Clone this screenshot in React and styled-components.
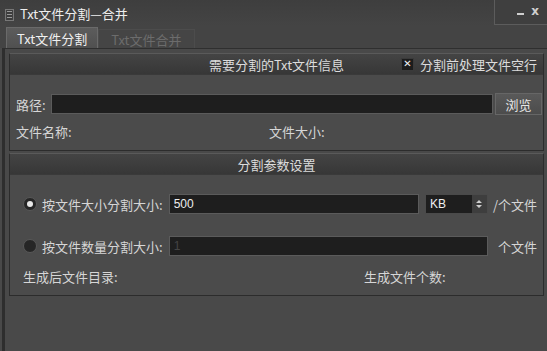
import React from "react"
import styled, { createGlobalStyle } from "styled-components"

const Global = createGlobalStyle`
  html, body { margin: 0; padding: 0; background: #4a4a4a; }
  body { font-family: "Noto Sans CJK SC", "Noto Sans", sans-serif; font-size: 13px; color: #d6d6d6; }
`

const Window = styled.div`
  width: 547px;
  height: 351px;
  background: #494949;
  display: flex;
  flex-direction: column;
  overflow: hidden;
`

const TitleBar = styled.div`
  height: 26px;
  display: flex;
  align-items: flex-start;
  background: linear-gradient(#3e3e3e, #444);
`

const TitleIcon = styled.span`
  width: 7px;
  height: 10px;
  margin: 9px 6px 0 5px;
  border: 1px solid #777;
  background: repeating-linear-gradient(#3c3c3c 0 2px, #999 2px 3px);
  background-size: 5px 3px;
  background-repeat: repeat-y;
  background-position: 1px 2px;
`

const Title = styled.div`
  margin-top: 6px;
  color: #eee;
  font-size: 13px;
  line-height: 16px;
`

const Controls = styled.div`
  margin-left: auto;
  width: 53px;
  height: 25px;
  border-left: 1px solid #5c5c5c;
  border-bottom: 1px solid #5c5c5c;
  background: #3f3f3f;
  display: flex;
  justify-content: flex-end;
  align-items: center;
  gap: 7px;
  padding: 0 8px 2px 0;
  box-sizing: border-box;
  color: #cfcfcf;
  font-family: "DejaVu Sans", sans-serif;
  font-weight: bold;
  font-size: 12px;
`

const MinLine = styled.span`
  width: 7px;
  height: 2px;
  margin-top: 5px;
  background: #cfcfcf;
`

const TabBar = styled.div`
  height: 22px;
  display: flex;
  align-items: flex-end;
  padding-left: 6px;
  background: #444;
`

const Tab = styled.div`
  height: ${p => (p.$active ? "21px" : "19px")};
  padding: 0 ${p => (p.$active ? "10px" : "12px")};
  display: flex;
  align-items: center;
  box-sizing: border-box;
  background: ${p => (p.$active ? "linear-gradient(#5c5c5c, #505050)" : "#454545")};
  border: 1px solid ${p => (p.$active ? "#6a6a6a" : "#4c4c4c")};
  border-bottom: none;
  color: ${p => (p.$active ? "#f0f0f0" : "#6c6c6c")};
  font-size: 13px;
`

const Panel = styled.div`
  flex: 1;
  margin-left: 2px;
  border-left: 3px solid #2e2e2e;
  border-top: 1px solid #2f2f2f;
  background: #494949;
  padding: 4px 3px 0 4px;
  display: flex;
  flex-direction: column;
  gap: 2px;
`

const Section = styled.div`
  border: 1px solid #2c2c2c;
  border-top-color: #5a5a5a;
  background: #4b4b4b;
  display: flex;
  flex-direction: column;
`

const SectionHead = styled.div`
  height: 20px;
  position: relative;
  display: flex;
  justify-content: center;
  align-items: center;
  background: linear-gradient(#444, #373737);
  border-bottom: 1px solid #3a3a3a;
  color: #dcdcdc;
`

const HeadCheck = styled.label`
  position: absolute;
  right: 6px;
  top: 0;
  height: 20px;
  display: flex;
  align-items: center;
  gap: 6px;
`

const CheckBox = styled.span`
  width: 11px;
  height: 11px;
  background: #1c1c1c;
  border: 1px solid #3a3a3a;
  display: flex;
  align-items: center;
  justify-content: center;
  color: #f2f2f2;
  font-family: "DejaVu Sans", sans-serif;
  font-weight: bold;
  font-size: 10px;
  line-height: 1;
`

const Body = styled.div`
  display: flex;
  flex-direction: column;
  padding: ${p => p.$pad || "0"};
  gap: ${p => p.$gap || "0"};
`

const Row = styled.div`
  display: flex;
  align-items: center;
  height: ${p => p.$h || "22px"};
`

const Label = styled.span`
  white-space: nowrap;
  width: ${p => p.$w || "auto"};
  margin-left: ${p => p.$ml || "0"};
  margin-right: ${p => p.$mr || "0"};
`

const Field = styled.div`
  flex: 1;
  height: 20px;
  box-sizing: border-box;
  background: #1e1e1e;
  border: 1px solid #5b5b5b;
  color: #eee;
  font-family: "Liberation Sans", sans-serif;
  font-size: 12px;
  padding-left: 4px;
  display: flex;
  align-items: center;
`

const Button = styled.div`
  width: 47px;
  height: 22px;
  margin-left: 2px;
  box-sizing: border-box;
  border: 1px solid #666;
  background: linear-gradient(#595959, #4c4c4c);
  display: flex;
  align-items: center;
  justify-content: center;
  color: #e6e6e6;
`

const Combo = styled.div`
  width: 63px;
  height: 20px;
  margin-left: 6px;
  box-sizing: border-box;
  background: #1e1e1e;
  border: 1px solid #4a4a4a;
  display: flex;
  align-items: center;
  font-family: "Liberation Sans", sans-serif;
  font-size: 12px;
  color: #f0f0f0;
  padding-left: 4px;
`

const Spin = styled.span`
  margin-left: auto;
  width: 15px;
  height: 18px;
  background: #3e3e3e;
  display: flex;
  align-items: center;
  justify-content: center;
`

const Radio = styled.span`
  width: 14px;
  height: 14px;
  border-radius: 50%;
  margin: 0 5px 0 0;
  box-sizing: border-box;
  background: #262626;
  border: 1px solid #585858;
  display: flex;
  align-items: center;
  justify-content: center;
  &::after {
    content: "";
    width: 6px;
    height: 6px;
    border-radius: 50%;
    background: ${p => (p.$on ? "#e8e8e8" : "transparent")};
  }
`

export default function App() {
  return (
    <>
      <Global />
      <Window>
        <TitleBar>
          <TitleIcon />
          <Title>Txt文件分割—合并</Title>
          <Controls>
            <MinLine />
            <span>x</span>
          </Controls>
        </TitleBar>
        <TabBar>
          <Tab $active>Txt文件分割</Tab>
          <Tab>Txt文件合并</Tab>
        </TabBar>
        <Panel>
          <Section>
            <SectionHead>
              需要分割的Txt文件信息
              <HeadCheck>
                <CheckBox>✕</CheckBox>
                分割前处理文件空行
              </HeadCheck>
            </SectionHead>
            <Body $pad="18px 1px 8px 6px" $gap="5px">
              <Row>
                <Label $mr="5px">路径:</Label>
                <Field />
                <Button>浏览</Button>
              </Row>
              <Row>
                <Label $w="253px">文件名称:</Label>
                <Label>文件大小:</Label>
              </Row>
            </Body>
          </Section>
          <Section>
            <SectionHead>分割参数设置</SectionHead>
            <Body $pad="18px 6px 8px 13px" $gap="20px">
              <Row>
                <Radio $on />
                <Label $mr="6px">按文件大小分割大小:</Label>
                <Field>500</Field>
                <Combo>
                  KB
                  <Spin>
                    <svg width="6" height="10" viewBox="0 0 6 10">
                      <path d="M0 4 L3 1 L6 4 Z M0 6 L3 9 L6 6 Z" fill="#cfcfcf" />
                    </svg>
                  </Spin>
                </Combo>
                <Label $ml="5px">/个文件</Label>
              </Row>
              <Row>
                <Radio />
                <Label $mr="6px">按文件数量分割大小:</Label>
                <Field>
                  <span style={{ color: "#444" }}>1</span>
                </Field>
                <Label $ml="10px">个文件</Label>
              </Row>
            </Body>
            <Body $pad="2px 6px 10px 13px">
              <Row $h="18px">
                <Label $w="341px">生成后文件目录:</Label>
                <Label>生成文件个数:</Label>
              </Row>
            </Body>
          </Section>
        </Panel>
      </Window>
    </>
  )
}
